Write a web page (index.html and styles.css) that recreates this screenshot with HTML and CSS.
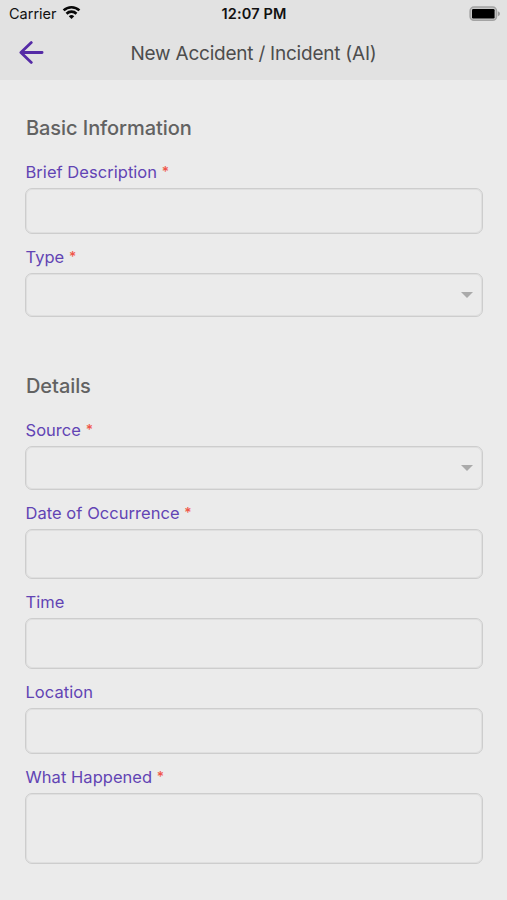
FILE: index.html
```html
<!DOCTYPE html>
<html lang="en">
<head>
<meta charset="utf-8">
<title>New Accident / Incident (AI)</title>
<link rel="stylesheet" href="styles.css">
</head>
<body>
<header class="header">
  <div class="status">
    <div class="carrier"><span>Carrier</span>
      <svg class="wifi" width="19" height="15" viewBox="0 0 20 16" fill="none" stroke="#080808" stroke-width="2.8"><path d="M1.6 5.8a12 12 0 0 1 16.8 0"/><path d="M4.7 9.3a7.5 7.5 0 0 1 10.6 0"/><path d="M7.1 11.9Q10 9.6 12.9 11.9L10 15z" fill="#080808" stroke="none"/></svg>
    </div>
    <div class="clock">12:07 PM</div>
    <svg class="battery" width="32" height="16" viewBox="0 0 32 16"><rect x="1.1" y="1.1" width="26.4" height="13.2" rx="3.8" fill="#c8c8c8" stroke="#a3a3a3" stroke-width="1.5"/><rect x="3" y="3" width="22.6" height="9.4" rx="1.2" fill="#000"/><path d="M28.9 5.2q2.1.8 2.1 2.5t-2.1 2.5z" fill="#9b9b9b"/></svg>
  </div>
  <div class="navbar">
    <svg class="back" width="26" height="24" viewBox="0 0 26 24" fill="none" stroke="#552ba6" stroke-width="2.8" stroke-linecap="round" stroke-linejoin="round"><path d="M13.3 1.6 2.9 11.5l10.4 9.9M3.1 11.5h21"/></svg>
    <h1 class="title">New Accident / Incident (AI)</h1>
    <span></span>
  </div>
</header>
<main class="form">
  <section class="section">
    <h2 class="heading">Basic Information</h2>
    <div class="field"><div class="label">Brief Description <b>*</b></div><div class="box text"></div></div>
    <div class="field"><div class="label">Type <b>*</b></div><div class="box select"><i class="caret"></i></div></div>
  </section>
  <section class="section">
    <h2 class="heading">Details</h2>
    <div class="field"><div class="label">Source <b>*</b></div><div class="box select"><i class="caret"></i></div></div>
    <div class="field"><div class="label">Date of Occurrence <b>*</b></div><div class="box date"></div></div>
    <div class="field"><div class="label">Time</div><div class="box date"></div></div>
    <div class="field"><div class="label">Location</div><div class="box text"></div></div>
    <div class="field"><div class="label">What Happened <b>*</b></div><div class="box area"></div></div>
  </section>
</main>
</body>
</html>
```
FILE: styles.css
```css
* { box-sizing: border-box; }
body {
  margin: 0;
  height: 900px;
  overflow: hidden;
  background: #ebebeb;
  font-family: Inter, "Liberation Sans", sans-serif;
}
.header { height: 80px; background: #e2e2e2; }
.status, .navbar {
  display: grid;
  grid-template-columns: 1fr auto 1fr;
  align-items: center;
}
.status { height: 27px; padding: 0 6px 0 9px; color: #111; font-size: 14.5px; }
.carrier { display: flex; align-items: center; gap: 5px; }
.wifi { margin-top: -2px; }
.clock { margin-right: 2px; font-weight: 600; font-size: 14.5px; letter-spacing: 0.15px; }
.battery { justify-self: end; }
.navbar { height: 51px; padding: 0 18px; }
.title { margin: 2px 0 0; font-size: 19px; font-weight: 400; color: #4d4d4d; letter-spacing: -0.23px; }
.form { padding: 35px 24.5px 0 25px; }
.section { margin-bottom: 55.3px; }
.heading {
  margin: 0 0 21px;
  padding-left: 1px;
  font-size: 20px;
  line-height: 26px;
  font-weight: 500;
  letter-spacing: -0.07px;
  color: #626262;
}
.field { margin-bottom: 13px; }
.label {
  height: 26px;
  padding-left: 0.5px;
  font-size: 16.5px;
  line-height: 20px;
  letter-spacing: 0.04px;
  color: #6244b4;
}
.label b {
  position: relative;
  top: -1px;
  font-weight: 500;
  font-size: 14px;
  line-height: 1;
  color: #f05548;
}
.box {
  border: 1px solid #cdcdcd;
  border-radius: 7px;
  box-shadow: inset 0 0 0 1px #dfdfdf;
}
.text { height: 46.4px; }
.select {
  height: 44px;
  display: flex;
  align-items: center;
  justify-content: flex-end;
  padding-right: 9px;
}
.date { height: 50.5px; }
.area { height: 71px; }
.caret {
  border: 6px solid transparent;
  border-top-color: #aaa;
  border-bottom: 0;
}
```
